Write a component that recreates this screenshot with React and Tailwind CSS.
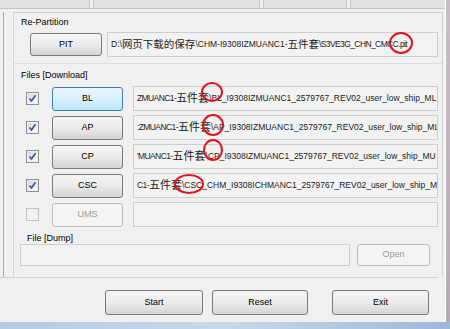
import React from 'react'

const ui = "font-['Liberation_Sans','Noto_Sans_CJK_SC',sans-serif]"

function Btn({ label, w, h = 'h-[24px]', active = false, disabled = false }) {
  let skin = 'border-[#7a7a7a] bg-gradient-to-b from-[#f5f5f5] via-[#ebebeb] to-[#d4d4d4] text-black'
  if (active) skin = 'border-[#3c7fb1] bg-gradient-to-b from-[#eaf6fd] via-[#d9f0fc] to-[#bee6fd] text-black'
  if (disabled) skin = 'border-[#b8bcbf] bg-[#f4f4f4] text-[#9a9a9a]'
  return (
    <div className={`${w} ${h} shrink-0 rounded-[3px] border ${skin} flex items-center justify-center text-[9px]`}>
      {label}
    </div>
  )
}

function Check({ checked = true }) {
  return (
    <div className={`w-[13px] h-[13px] shrink-0 border ${checked ? 'border-[#8e8f8f]' : 'border-[#c2c2c2]'} p-px`}>
      <div className={`w-full h-full ${checked ? 'bg-gradient-to-br from-[#d8d8d8] to-[#fafafa]' : 'bg-[#f2f2f2]'} flex items-center justify-center`}>
        {checked && (
          <svg width="9" height="9" viewBox="0 0 9 9">
            <path d="M1.5 4.5 L3.5 7 L7.5 1.2" fill="none" stroke="#3b4f93" strokeWidth="1.6" />
          </svg>
        )}
      </div>
    </div>
  )
}

function Box({ w, h = 'h-[25px]', children }) {
  return (
    <div className={`${w} ${h} shrink-0 border border-[#cdcdcd] bg-[#f2f2f2] flex items-center overflow-hidden whitespace-nowrap pl-[3px] text-[8.5px] text-[#222]`}>
      {children}
    </div>
  )
}

const rows = [
  { name: 'BL', active: true, pre: 'ZMUANC1-', post: '\\BL_I9308IZMUANC1_2579767_REV02_user_low_ship_ML' },
  { name: 'AP', pre: ':ZMUANC1-', post: '\\AP_I9308IZMUANC1_2579767_REV02_user_low_ship_ML' },
  { name: 'CP', pre: "'MUANC1-", post: '\\CP_I9308IZMUANC1_2579767_REV02_user_low_ship_MU' },
  { name: 'CSC', pre: 'C1-', post: '\\CSC_CHM_I9308ICHMANC1_2579767_REV02_user_low_ship_ML' },
]

export default function App() {
  return (
    <div className={`relative w-[450px] h-[329px] overflow-hidden bg-[#f0f0f0] ${ui} text-black`}>
      <div className="flex h-[322px]">
        <div className="w-[445px] flex flex-col">
          {/* top strip */}
          <div className="h-[9px] flex border-b border-[#c6c6c6]">
            <div className="w-[90px] bg-[#e2e2e2] border-r border-[#c4c4c4]" />
            <div className="w-[3px]" />
            <div className="w-[167px] bg-[#e2e2e2] border-x border-[#c4c4c4]" />
            <div className="w-[3px]" />
            <div className="w-[84px] bg-[#e2e2e2] border-x border-[#c4c4c4]" />
            <div className="w-[3px]" />
            <div className="flex-1 bg-[#e2e2e2] border-l border-[#c4c4c4]" />
          </div>
          <div className="h-[3px]" />

          <div className="flex h-[265px]">
            <div className="w-[4px] border-r border-[#aaaaaa]" />
            <div className="w-[9px]" />
            {/* main panel */}
            <div className="w-[430px] border-t border-l border-r border-[#d2d2d2] flex flex-col">
              <div className="ml-[7px] mt-[4px] h-[11px] text-[9px] leading-[11px]">Re-Partition</div>
              <div className="mt-[4px] flex items-center">
                <div className="w-[16px]" />
                <Btn label="PIT" w="w-[72px]" h="h-[23px]" />
                <div className="w-[5px]" />
                <Box w="w-[331px]">
                  <span>D:\</span>
                  <span className="text-[10.5px]">网页下载的保存</span>
                  <span>\CHM-I9308IZMUANC1-</span>
                  <span className="text-[10.5px]">五件套</span>
                  <span className="tracking-[-0.6px]">\S3VE3G_CHN_CMCC.pit</span>
                </Box>
              </div>
              <div className="mt-[6px] border-t border-[#dedede]" />
              <div className="ml-[7px] mt-[6px] h-[11px] text-[9px] leading-[11px]">Files [Download]</div>
              <div className="mt-[5px] flex flex-col gap-[4px]">
                {rows.map(r => (
                  <div key={r.name} className="flex items-center h-[25px]">
                    <div className="w-[12px]" />
                    <Check />
                    <div className="w-[13px]" />
                    <Btn label={r.name} w="w-[71px]" active={r.active} />
                    <div className="w-[10px]" />
                    <Box w="w-[305px]">
                      <span className="tracking-[-0.6px]">{r.pre}</span>
                      <span className="text-[11px]">五件套</span>
                      <span>{r.post}</span>
                    </Box>
                  </div>
                ))}
                <div className="flex items-center h-[25px]">
                  <div className="w-[12px]" />
                  <Check checked={false} />
                  <div className="w-[13px]" />
                  <Btn label="UMS" w="w-[71px]" disabled />
                  <div className="w-[10px]" />
                  <Box w="w-[305px]" />
                </div>
              </div>
              <div className="ml-[13px] mt-[6px] h-[11px] text-[9px] leading-[11px]">File [Dump]</div>
              <div className="flex items-center">
                <div className="w-[6px]" />
                <Box w="w-[330px]" h="h-[22px]" />
                <div className="w-[7px]" />
                <Btn label="Open" w="w-[73px]" h="h-[22px]" disabled />
              </div>
            </div>
          </div>

          <div className="w-[438px] border-t border-[#d0d0d0]" />

          {/* action buttons */}
          <div className="mt-[12px] flex">
            <div className="w-[105px]" />
            <Btn label="Start" w="w-[98px]" h="h-[25px]" />
            <div className="w-[9px]" />
            <Btn label="Reset" w="w-[96px]" h="h-[25px]" />
            <div className="w-[24px]" />
            <Btn label="Exit" w="w-[97px]" h="h-[25px]" />
          </div>
        </div>
        <div className="w-px bg-white" />
        <div className="flex-1 bg-gradient-to-b from-[#c9bcc4] to-[#b7aab6]" />
      </div>
      <div className="h-[7px] bg-gradient-to-r from-[#b4cbe3] via-[#c6d9ec] to-[#9db9d8]" />

      {/* red marks drawn over the screenshot */}
      <svg className="absolute inset-0 pointer-events-none" width="450" height="329">
        <g fill="none" stroke="#e0141e" strokeWidth="2">
          <ellipse cx="401" cy="43" rx="11" ry="10" />
          <ellipse cx="212" cy="92" rx="10" ry="9" />
          <ellipse cx="213" cy="125" rx="10" ry="10" />
          <ellipse cx="213" cy="150" rx="9" ry="10" />
          <ellipse cx="189" cy="184" rx="14" ry="9" />
        </g>
      </svg>
    </div>
  )
}
